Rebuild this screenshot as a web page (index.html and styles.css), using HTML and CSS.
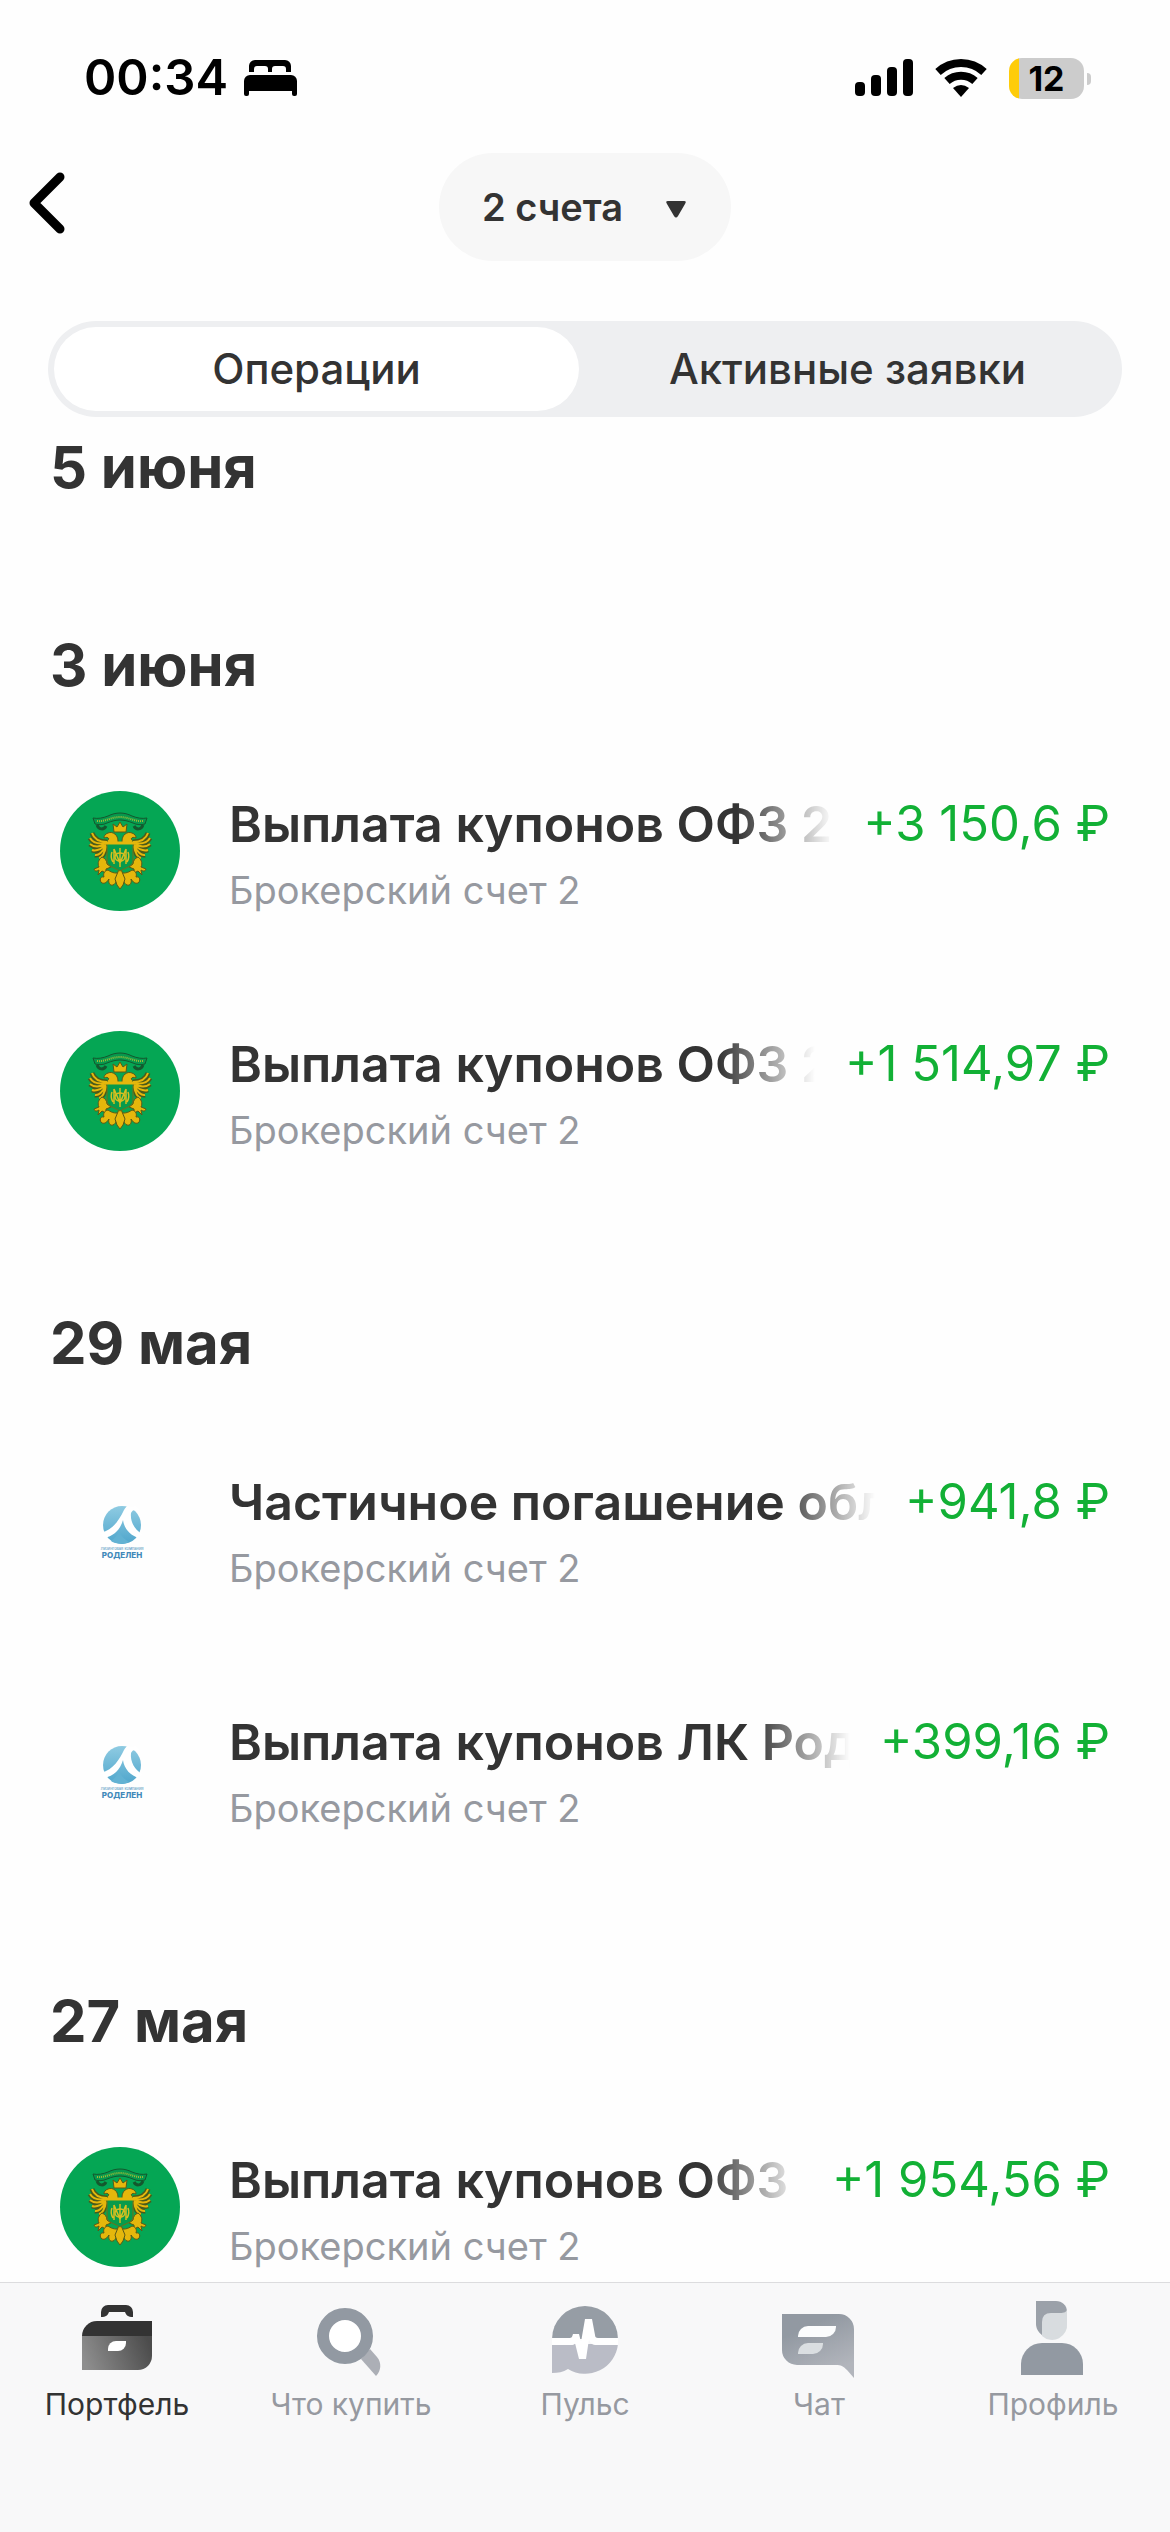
FILE: index.html
```html
<!DOCTYPE html>
<html lang="ru">
<head>
    <meta charset="UTF-8">
    <meta name="viewport" content="width=device-width, initial-scale=1.0">
    <title>Операции</title>
    <link rel="stylesheet" href="styles.css">
</head>
<body>
    <!-- Shared logos -->
    <svg class="sprite" aria-hidden="true">
        <defs>
            <linearGradient id="sky" x1="0" y1="0" x2="0" y2="1">
                <stop offset="0" stop-color="#8fcbe2"/>
                <stop offset="1" stop-color="#4fa6cc"/>
            </linearGradient>
            <path id="feathers" d="M47 51Q35 51 32 42M46 52Q34 54 30 47M46 53Q36 58 30 53M46 54Q38 61 32 59M46 55Q40 65 35 64M46 55Q44 66 39 67"/>
            <g id="half">
                <use href="#feathers" stroke="#4a5a1a" stroke-width="5"/>
                <use href="#feathers" stroke="#e5b70c" stroke-width="2"/>
                <g fill="#e5b70c" stroke="#5b5a16" stroke-width="1">
                    <path d="M58 50c0-6-5-10-10-8-3 1-4 3-4 5 2-1 4-1 5 1-2 1-2 3 0 4h9z"/>
                    <path d="M42 66c-3 2-5 6-3 10l-5 2c1 3 3 2 5 1l-1 5 4-4 4 2v-4l5-2-4-3c0-3-2-6-5-7z"/>
                    <path d="M48 79c-4 1-5 4-4 7-4-1-5 4-2 6 3 1 5-1 7-4-1 4 1 7 4 6s4-6 7-13c-3 2-8 1-12-2z"/>
                </g>
            </g>
        </defs>
        <symbol id="logo-minfin" viewBox="0 0 120 120">
            <circle cx="60" cy="60" r="60" fill="#05a654"/>
            <path d="M33 27c5 1 10 0 15-2 4-2 8-3 12-3s8 1 12 3c5 2 10 3 15 2l-2 6c-4 1-8 1-12-1-5-2-9-3-13-3s-8 1-13 3c-4 2-8 2-12 1z" fill="#07984d" stroke="#14582e" stroke-width="1"/>
            <path d="M37 30c8 1 14-4 23-4s15 5 23 4" fill="none" stroke="#a3bb35" stroke-width="2" stroke-dasharray="1 1"/>
            <path d="M37 34c2 5 7 5 9 1M83 34c-2 5-7 5-9 1" fill="none" stroke="#14582e" stroke-width="3"/>
            <g fill="none">
                <use href="#half"/>
                <use href="#half" transform="translate(120 0) scale(-1 1)"/>
            </g>
            <g fill="#e5b70c" stroke="#5b5a16" stroke-width="1">
                <path d="M60 76l-5 12 2 6 3 4 3-4 2-6z"/>
                <path d="M54 41l-1-8 4 3 3-5 3 5 4-3-1 8z"/>
            </g>
            <path d="M47 52h26v18c0 5-6 6-13 10-7-4-13-5-13-10z" fill="#079b4b" stroke="#776c16" stroke-width="1"/>
            <path d="M45 52h30" stroke="#e5b70c" stroke-width="3"/>
            <g fill="none" stroke="#d8bf20" stroke-width="1.5">
                <ellipse cx="60" cy="66" rx="5" ry="4"/>
                <path d="M60 57v19M54 58l6 14 6-14M54 58v15M66 58v15M52 61q-2 5 1 10M68 61q2 5-1 10"/>
            </g>
        </symbol>
        <symbol id="logo-rodelen" viewBox="0 0 120 120">
            <circle cx="62" cy="56" r="19" fill="url(#sky)"/>
            <path d="M68 36c2 3 5 3 7 0l5 5c-5-1-8 0-9 3-1 9 4 17 11 21l-3 4c-8-2-15-9-16-18-3 10-9 16-19 18l-3-5c13-4 18-13 23-23 1-2 3-4 4-5z" fill="#fff"/>
            <path d="M59 61c1 5 5 9 10 12-5 3-14 2-18-1 4-3 7-6 8-11z" fill="#62b2d3"/>
            <text x="62" y="81" class="logo-note" text-anchor="middle">Лизинговая компания</text>
            <text x="62" y="89" class="logo-name" text-anchor="middle">РОДЕЛЕН</text>
        </symbol>
    </svg>

    <header class="header">
        <div class="status-bar">
            <div class="status-left">
                <span class="time">00:34</span>
                <svg width="53" height="36" viewBox="0 0 53 36">
                    <path d="M5 12V6a6 6 0 0 1 6-6h30a6 6 0 0 1 6 6v6h-5V9q0-3-3-3H31q-3 0-3 3v3h-4V9q0-3-3-3h-8q-3 0-3 3v3z"/>
                    <path d="M0 34V21a6 6 0 0 1 6-6h41a6 6 0 0 1 6 6v13q0 2-2 2h-1q-2 0-2-2v-3H5v3q0 2-2 2H2q-2 0-2-2z"/>
                </svg>
            </div>
            <div class="status-right">
                <svg width="58" height="38" viewBox="0 0 58 38">
                    <rect x="0" y="23" width="10" height="14" rx="4"/>
                    <rect x="16" y="16" width="10" height="21" rx="4"/>
                    <rect x="32" y="8" width="10" height="29" rx="4"/>
                    <rect x="48" y="0" width="10" height="37" rx="4"/>
                </svg>
                <svg width="52" height="38" viewBox="0 0 52 38">
                    <path d="M3 13a34 34 0 0 1 46 0M12 22a21 21 0 0 1 28 0" fill="none" stroke="#000" stroke-width="8"/>
                    <path d="M18 29q8-6 16 0l-8 9z"/>
                </svg>
                <div class="battery"><span>12</span></div>
            </div>
        </div>

        <div class="toolbar">
            <button class="back" aria-label="Назад">
                <svg width="36" height="62" viewBox="0 0 36 62">
                    <path d="M31 5L5 31l26 26" fill="none" stroke="#000" stroke-width="9" stroke-linecap="round" stroke-linejoin="round"/>
                </svg>
            </button>
            <div class="account">
                <select class="account-select" aria-label="Счета">
                    <option>2 счета</option>
                </select>
                <svg class="account-arrow" width="20" height="17" viewBox="0 0 20 17">
                    <path d="M2 0h16q3 0 1 3l-7 12q-2 3-4 0L1 3Q-1 0 2 0z" fill="#333"/>
                </svg>
            </div>
        </div>

        <div class="tabs">
            <button class="tab active">Операции</button>
            <button class="tab">Активные заявки</button>
        </div>
    </header>

    <main class="feed">
        <section class="day">
            <h2>5 июня</h2>
        </section>

        <section class="day">
            <h2>3 июня</h2>
            <ul>
                <li class="row">
                    <svg class="logo"><use href="#logo-minfin"/></svg>
                    <div class="info">
                        <div class="line">
                            <span class="title">Выплата купонов ОФЗ 26</span>
                            <span class="amount">+3 150,6 ₽</span>
                        </div>
                        <div class="note">Брокерский счет 2</div>
                    </div>
                </li>
                <li class="row">
                    <svg class="logo"><use href="#logo-minfin"/></svg>
                    <div class="info">
                        <div class="line">
                            <span class="title">Выплата купонов ОФЗ 26</span>
                            <span class="amount">+1 514,97 ₽</span>
                        </div>
                        <div class="note">Брокерский счет 2</div>
                    </div>
                </li>
            </ul>
        </section>

        <section class="day">
            <h2>29 мая</h2>
            <ul>
                <li class="row">
                    <svg class="logo"><use href="#logo-rodelen"/></svg>
                    <div class="info">
                        <div class="line">
                            <span class="title">Частичное погашение обл</span>
                            <span class="amount">+941,8 ₽</span>
                        </div>
                        <div class="note">Брокерский счет 2</div>
                    </div>
                </li>
                <li class="row">
                    <svg class="logo"><use href="#logo-rodelen"/></svg>
                    <div class="info">
                        <div class="line">
                            <span class="title">Выплата купонов ЛК Род</span>
                            <span class="amount">+399,16 ₽</span>
                        </div>
                        <div class="note">Брокерский счет 2</div>
                    </div>
                </li>
            </ul>
        </section>

        <section class="day">
            <h2>27 мая</h2>
            <ul>
                <li class="row">
                    <svg class="logo"><use href="#logo-minfin"/></svg>
                    <div class="info">
                        <div class="line">
                            <span class="title">Выплата купонов ОФЗ 26</span>
                            <span class="amount">+1 954,56 ₽</span>
                        </div>
                        <div class="note">Брокерский счет 2</div>
                    </div>
                </li>
            </ul>
        </section>
    </main>

    <nav class="nav">
        <a href="#" class="active">
            <svg width="84" height="84" viewBox="0 0 84 84">
                <defs>
                    <linearGradient id="case" x1="0" y1="0.6" x2="1" y2="0.4">
                        <stop offset="0" stop-color="#8e8e8e"/>
                        <stop offset="1" stop-color="#4c4c4c"/>
                    </linearGradient>
                </defs>
                <path d="M26 19v-5a7 7 0 0 1 7-7h18a7 7 0 0 1 7 7v5c-5 0-7-2-8-5H34c-1 3-3 5-8 5z" fill="#333"/>
                <path d="M7 38a15 15 0 0 1 15-15h55v15z" fill="#333"/>
                <path d="M7 38h70v20a14 14 0 0 1-14 14H7z" fill="url(#case)"/>
                <path d="M33 53v-2a8 8 0 0 1 8-8h10v2a8 8 0 0 1-8 8z" fill="#fff"/>
            </svg>
            <span>Портфель</span>
        </a>
        <a href="#">
            <svg width="84" height="84" viewBox="0 0 84 84">
                <path d="M52 61l9-10 7 8c5 6 4 14-1 19z" fill="#acafb6"/>
                <circle cx="36" cy="38" r="22" fill="#fff" stroke="#9299a2" stroke-width="12"/>
            </svg>
            <span>Что купить</span>
        </a>
        <a href="#">
            <svg width="84" height="84" viewBox="0 0 84 84">
                <path d="M9 41a33 33 0 0 1 66 0z" fill="#969da5"/>
                <path d="M9 46v29c6 0 11-1 16-4a33 33 0 0 0 50-25z" fill="#babcc6"/>
                <path d="M9 40h17c3 0 3-1 4-4h6l2 8 4-23h7l3 16c0 2 1 3 3 3h20v7H54c-5 0-7-2-8-6l-3 20h-7l-4-16c-1 2-2 2-4 2H9z" fill="#fff"/>
            </svg>
            <span>Пульс</span>
        </a>
        <a href="#">
            <svg width="84" height="84" viewBox="0 0 84 84">
                <defs>
                    <linearGradient id="bubble" x1="0" y1="0" x2="0.5" y2="1">
                        <stop offset="0.3" stop-color="#9299a2"/>
                        <stop offset="1" stop-color="#b2b5bc"/>
                    </linearGradient>
                </defs>
                <path d="M5 16h57a15 15 0 0 1 15 15v49l-7-8c-4-4-6-5-11-5H20A15 15 0 0 1 5 52z" fill="url(#bubble)"/>
                <path d="M21 39v-1a10 10 0 0 1 10-10h28v1a10 10 0 0 1-10 10z" fill="#fbfcfd"/>
                <path d="M21 56v-1a10 10 0 0 1 10-10h15v1a10 10 0 0 1-10 10z" fill="#dadee1"/>
            </svg>
            <span>Чат</span>
        </a>
        <a href="#">
            <svg width="84" height="84" viewBox="0 0 84 84">
                <path d="M25 3h20c6 0 11 4 11 11l-1 1-23 23c-4-3-7-7-7-12z" fill="#9ba1a9"/>
                <path d="M31 38V24q0-9 9-9h9c4 0 7-1 7-4v14a15 15 0 0 1-25 13z" fill="#d8dcdf"/>
                <path d="M10 77V66a21 21 0 0 1 21-21h20a21 21 0 0 1 21 21v11z" fill="#9299a2"/>
            </svg>
            <span>Профиль</span>
        </a>
    </nav>
</body>
</html>
```

FILE: styles.css
```css
* {
    box-sizing: border-box;
}
body {
    margin: 0;
    height: 100vh;
    display: flex;
    flex-direction: column;
    background: #fefefe;
    color: #333;
    font-family: Inter, "Liberation Sans", sans-serif;
}
button, select {
    font-family: inherit;
    color: inherit;
    border: none;
    cursor: pointer;
}
h2, ul {
    margin: 0;
    padding: 0;
}
svg {
    display: block;
    flex-shrink: 0;
}
.sprite {
    position: absolute;
    width: 0;
    height: 0;
}

/* Header */
.header {
    padding-bottom: 14px;
}
.status-bar {
    display: flex;
    justify-content: space-between;
    align-items: center;
    padding: 48px 86px 45px 84px;
    color: #000;
}
.status-left, .status-right {
    display: flex;
    align-items: center;
}
.status-left {
    gap: 16px;
}
.status-right {
    gap: 22px;
}
.time {
    font-size: 49px;
    line-height: 60px;
    font-weight: 600;
}
.battery {
    position: relative;
    width: 75px;
    border-radius: 13px;
    background: linear-gradient(to right, #fecc0a 10px, #ccc 10px);
    font-size: 34px;
    line-height: 41px;
    font-weight: 700;
    text-align: center;
}
.battery::after {
    content: "";
    position: absolute;
    right: -7px;
    top: 15px;
    width: 4px;
    height: 12px;
    border-radius: 0 4px 4px 0;
    background: #ccc;
}
.toolbar {
    display: grid;
    grid-template-columns: 1fr auto 1fr;
    align-items: center;
    padding: 0 29px;
}
.back {
    justify-self: start;
    padding: 0 0 8px;
    background: none;
}
.account {
    position: relative;
}
.account-select {
    appearance: none;
    height: 108px;
    padding: 0 107px 0 43px;
    border-radius: 54px;
    background: #f7f7f7;
    font-size: 38px;
    font-weight: 600;
}
.account-arrow {
    position: absolute;
    right: 45px;
    top: 48px;
    pointer-events: none;
}
.tabs {
    display: grid;
    grid-template-columns: 525fr 537fr;
    margin: 60px 48px 0;
    padding: 6px;
    border-radius: 48px;
    background: #eeeff1;
}
.tab {
    padding: 0;
    border-radius: 42px;
    background: none;
    font-size: 42px;
    line-height: 84px;
    font-weight: 500;
}
.tab.active {
    background: #fff;
}

/* Operations */
.feed {
    flex: 1;
    min-height: 0;
    overflow: hidden;
}
.day h2 {
    padding: 96px 50px 30px;
    font-size: 58px;
    line-height: 72px;
    font-weight: 700;
}
.day:first-child h2 {
    padding-top: 0;
}
.row {
    display: flex;
    align-items: flex-start;
    gap: 49px;
    padding: 60px 60px 48px;
}
.logo {
    width: 120px;
    height: 120px;
}
.logo-note {
    font-size: 4px;
    fill: #4d93bd;
}
.logo-name {
    font-size: 8px;
    font-weight: 800;
    fill: #4189ba;
}
.info {
    flex: 1;
    min-width: 0;
}
.line {
    display: flex;
    gap: 30px;
    line-height: 66px;
    white-space: nowrap;
}
.title {
    flex: 1;
    min-width: 0;
    overflow: hidden;
    font-size: 50px;
    font-weight: 600;
    mask-image: linear-gradient(to left, transparent, #000 96px);
}
.amount {
    font-size: 49px;
    color: #12b035;
}
.note {
    font-size: 38px;
    line-height: 66px;
    color: #9699a0;
}

/* Bottom navigation */
.nav {
    display: grid;
    grid-template-columns: repeat(5, 1fr);
    padding: 15px 0 110px;
    border-top: 1px solid #dcdcde;
    background: #f8f8f9;
}
.nav a {
    display: flex;
    flex-direction: column;
    align-items: center;
    gap: 4px;
    color: #9699a0;
    font-size: 30px;
    line-height: 36px;
    text-decoration: none;
}
.nav a.active {
    color: #333;
}
```
